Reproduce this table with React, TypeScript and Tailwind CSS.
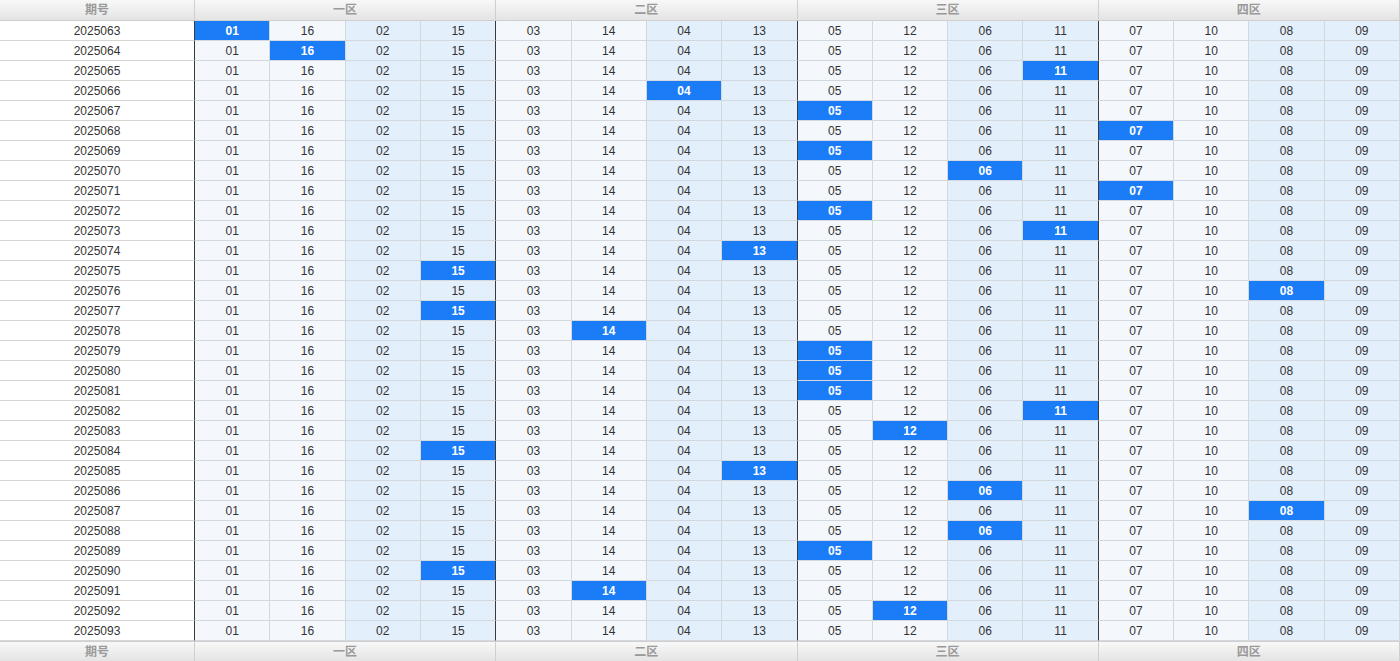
const NUMS = ['01', '16', '02', '15', '03', '14', '04', '13', '05', '12', '06', '11', '07', '10', '08', '09'];

// index of the highlighted column per period, -1 = none
const HITS: [string, number][] = [
  ['2025063', 0],
  ['2025064', 1],
  ['2025065', 11],
  ['2025066', 6],
  ['2025067', 8],
  ['2025068', 12],
  ['2025069', 8],
  ['2025070', 10],
  ['2025071', 12],
  ['2025072', 8],
  ['2025073', 11],
  ['2025074', 7],
  ['2025075', 3],
  ['2025076', 14],
  ['2025077', 3],
  ['2025078', 5],
  ['2025079', 8],
  ['2025080', 8],
  ['2025081', 8],
  ['2025082', 11],
  ['2025083', 9],
  ['2025084', 3],
  ['2025085', 7],
  ['2025086', 10],
  ['2025087', 14],
  ['2025088', 10],
  ['2025089', 8],
  ['2025090', 3],
  ['2025091', 5],
  ['2025092', 9],
  ['2025093', -1],
];

const ZONES = ['一区', '二区', '三区', '四区'];

function HeaderRow({ bottom }: { bottom?: boolean }) {
  const base =
    'flex h-full items-center justify-center bg-gradient-to-b from-[#f8f8f8] to-[#e4e4e4] text-[12px] font-bold text-[#999] border-[#cfcfcf]';
  return (
    <>
      <div className={`${base} border-r ${bottom ? 'border-t' : 'border-b'}`}>期号</div>
      {ZONES.map((z) => (
        <div key={z} className={`${base} col-span-4 border-r ${bottom ? 'border-t' : 'border-b'}`}>
          {z}
        </div>
      ))}
    </>
  );
}

function Cell({ value, col, hit }: { value: string; col: number; hit: boolean }) {
  const inGroup = col % 4;
  const groupEnd = inGroup === 3 && col !== 15;
  const bg = hit ? 'bg-[#1a7cf7] text-white font-bold' : inGroup < 2 ? 'bg-[#f4f8fd] text-[#333]' : 'bg-[#e4effc] text-[#333]';
  const right = groupEnd ? 'border-r-[#3a3a3a]' : 'border-r-[#d3d8de]';
  return (
    <div className={`flex items-center justify-center border-b border-r border-b-[#d3d8de] ${right} ${bg}`}>
      {value}
    </div>
  );
}

export default function App() {
  return (
    <div
      className="h-[661px] w-[1400px] overflow-hidden bg-white text-[12px] leading-none text-[#333]"
      style={{ fontFamily: '"Liberation Sans", Arial, "Noto Sans CJK SC", sans-serif' }}
    >
      <div className="grid grid-cols-[195px_repeat(16,minmax(0,1fr))] grid-rows-[21px_repeat(31,20px)_20px]">
        <HeaderRow />
        {HITS.map(([period, hit]) => (
          <div key={period} className="contents">
            <div className="flex items-center justify-center border-b border-r border-b-[#d6d6d6] border-r-[#3a3a3a] bg-white text-[#333]">
              {period}
            </div>
            {NUMS.map((n, i) => (
              <Cell key={i} value={n} col={i} hit={hit === i} />
            ))}
          </div>
        ))}
        <HeaderRow bottom />
      </div>
    </div>
  );
}
